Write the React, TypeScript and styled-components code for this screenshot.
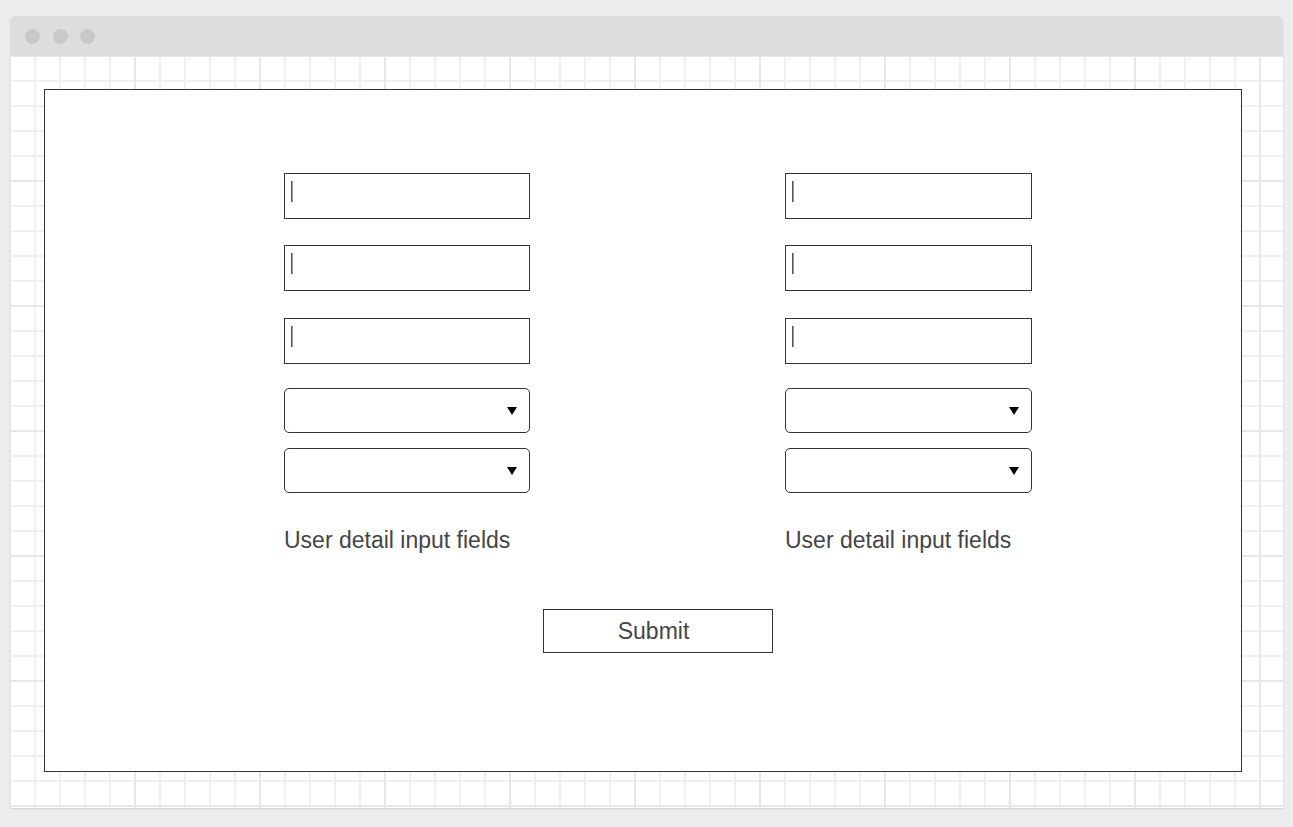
import React from "react";
import styled, { createGlobalStyle } from "styled-components";

const Global = createGlobalStyle`
  html, body { margin: 0; padding: 0; background: #ededed; }
  body { font-family: "Liberation Sans", Arial, sans-serif; }
`;

const Page = styled.div`
  padding: 16px 10px 0 10px;
  height: 827px;
  box-sizing: border-box;
`;

const Window = styled.div`
  width: 1273px;
  height: 792px;
  border-radius: 6px 6px 0 0;
  overflow: hidden;
  display: flex;
  flex-direction: column;
  box-shadow: 0 1px 2px rgba(0, 0, 0, 0.12);
`;

const TitleBar = styled.div`
  height: 40px;
  flex: none;
  background: #dddddd;
  display: flex;
  align-items: center;
  padding-left: 15px;
  gap: 12.5px;
  box-sizing: border-box;
`;

const Dot = styled.span`
  width: 15px;
  height: 15px;
  border-radius: 50%;
  background: #c9c9c9;
`;

const Canvas = styled.div`
  flex: 1;
  background-color: #ffffff;
  background-image:
    linear-gradient(to right, #e7e7e7 2px, transparent 2px),
    linear-gradient(to bottom, #e7e7e7 2px, transparent 2px),
    linear-gradient(to right, #f0f0f0 2px, transparent 2px),
    linear-gradient(to bottom, #f0f0f0 2px, transparent 2px);
  background-size: 125px 125px, 125px 125px, 25px 25px, 25px 25px;
  background-position: 124px -1px, -1px 124px, -1px -1px, -1px 24px;
  padding: 33px 0 0 34px;
  box-sizing: border-box;
`;

const Panel = styled.div`
  width: 1198px;
  height: 683px;
  border: 1px solid #333333;
  background: #ffffff;
  box-sizing: border-box;
  padding: 83px 0 0 239px;
`;

const FormArea = styled.div`
  width: 748px;
  display: flex;
  flex-direction: column;
  align-items: center;
`;

const Columns = styled.div`
  display: grid;
  grid-template-columns: 246px 247px;
  column-gap: 255px;
  width: 100%;
`;

const Column = styled.div`
  display: flex;
  flex-direction: column;
`;

const TextField = styled.div<{ $gap: number }>`
  height: 46px;
  border: 1px solid #333333;
  box-sizing: border-box;
  margin-bottom: ${(p) => p.$gap}px;
  padding: 7px 0 0 6px;
`;

const Caret = styled.div`
  width: 2px;
  height: 21px;
  background: linear-gradient(to right, #555 0 1px, #999 1px 2px);
`;

const Select = styled.div<{ $gap: number }>`
  height: 45px;
  border: 1px solid #333333;
  border-radius: 5px;
  box-sizing: border-box;
  display: flex;
  align-items: center;
  justify-content: flex-end;
  padding-right: 12px;
  margin-bottom: ${(p) => p.$gap}px;
`;

const Arrow = styled.span`
  width: 0;
  height: 0;
  border-left: 5.5px solid transparent;
  border-right: 5.5px solid transparent;
  border-top: 8px solid #000000;
`;

const Label = styled.div`
  font-size: 23px;
  color: #454545;
  line-height: 28px;
  height: 28px;
  margin-top: 33px;
`;

const SubmitButton = styled.div`
  margin-top: 55px;
  width: 230px;
  height: 44px;
  border: 1px solid #333333;
  box-sizing: border-box;
  display: flex;
  align-items: center;
  justify-content: center;
  padding-right: 9px;
  font-size: 23px;
  color: #454545;
`;

const fieldGaps = [26, 27, 24];

const UserColumn = () => (
  <Column>
    {fieldGaps.map((g, i) => (
      <TextField key={i} $gap={g}>
        <Caret />
      </TextField>
    ))}
    <Select $gap={15}>
      <Arrow />
    </Select>
    <Select $gap={0}>
      <Arrow />
    </Select>
    <Label>User detail input fields</Label>
  </Column>
);

export default function App() {
  return (
    <>
      <Global />
      <Page>
        <Window>
          <TitleBar>
            <Dot />
            <Dot />
            <Dot />
          </TitleBar>
          <Canvas>
            <Panel>
              <FormArea>
                <Columns>
                  <UserColumn />
                  <UserColumn />
                </Columns>
                <SubmitButton>Submit</SubmitButton>
              </FormArea>
            </Panel>
          </Canvas>
        </Window>
      </Page>
    </>
  );
}
